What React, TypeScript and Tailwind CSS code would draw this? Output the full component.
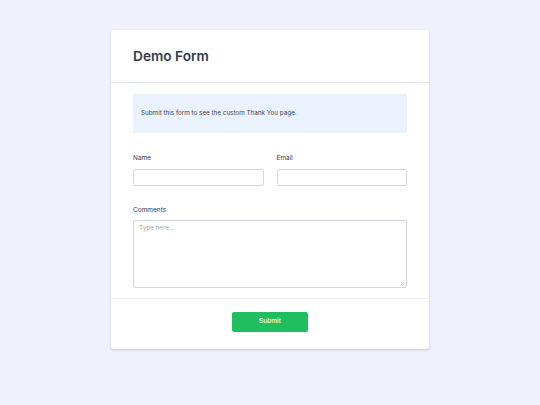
import React from "react";

export default function App() {
  return (
    <div className="min-h-[405px] w-full bg-[#f1f1fd] pt-[30px] font-['Inter',sans-serif]">
      <div className="mx-auto w-[318px] rounded-[2px] bg-white shadow-[0_1px_3px_rgba(0,0,0,0.12),0_1px_2px_rgba(0,0,0,0.06)]">
        {/* header */}
        <div className="flex h-[53px] items-center border-b border-[#e5e7eb] px-[22px]">
          <h1 className="text-[13.7px] font-semibold text-[#363a4b]">Demo Form</h1>
        </div>

        {/* body */}
        <div className="px-[22px] pt-[11px] pb-[10px]">
          <div className="flex h-[39px] items-center bg-[#e9f2fd] px-[8px]">
            <p className="text-[6.3px] text-[#3f4451]">Submit this form to see the custom Thank You page.</p>
          </div>

          <div className="mt-[20px] grid grid-cols-2 gap-[13px]">
            <label className="flex flex-col">
              <span className="mb-[5px] text-[6.5px] leading-[11px] text-[#363a4b]">Name</span>
              <input className="block h-[17px] rounded-[2px] border border-[#d4d6db] bg-white" />
            </label>
            <label className="flex flex-col">
              <span className="mb-[5px] text-[6.5px] leading-[11px] text-[#363a4b]">Email</span>
              <input className="block h-[17px] rounded-[2px] border border-[#d4d6db] bg-white" />
            </label>
          </div>

          <label className="mt-[19px] flex flex-col">
            <span className="mb-[4px] text-[6.5px] leading-[11px] text-[#363a4b]">Comments</span>
            <div className="relative">
              <textarea
                placeholder="Type here..."
                className="block h-[68px] w-full resize-none rounded-[2px] border border-[#d4d6db] bg-white px-[5px] py-[3px] text-[6.3px] placeholder:text-[#a7aab2]"
              />
              <svg className="absolute right-[2px] bottom-[2px]" width="5" height="5" viewBox="0 0 5 5">
                <path d="M4.5 0.5 L0.5 4.5 M4.5 2.5 L2.5 4.5" stroke="#b5b8bf" strokeWidth="0.7" />
              </svg>
            </div>
          </label>
        </div>

        {/* footer */}
        <div className="flex justify-center border-t border-[#f0f1f3] pt-[13px] pb-[17px]">
          <button className="h-[20px] w-[76px] rounded-[2px] bg-[#1fbe5e] text-[6.5px] font-medium text-white">
            Submit
          </button>
        </div>
      </div>
    </div>
  );
}
